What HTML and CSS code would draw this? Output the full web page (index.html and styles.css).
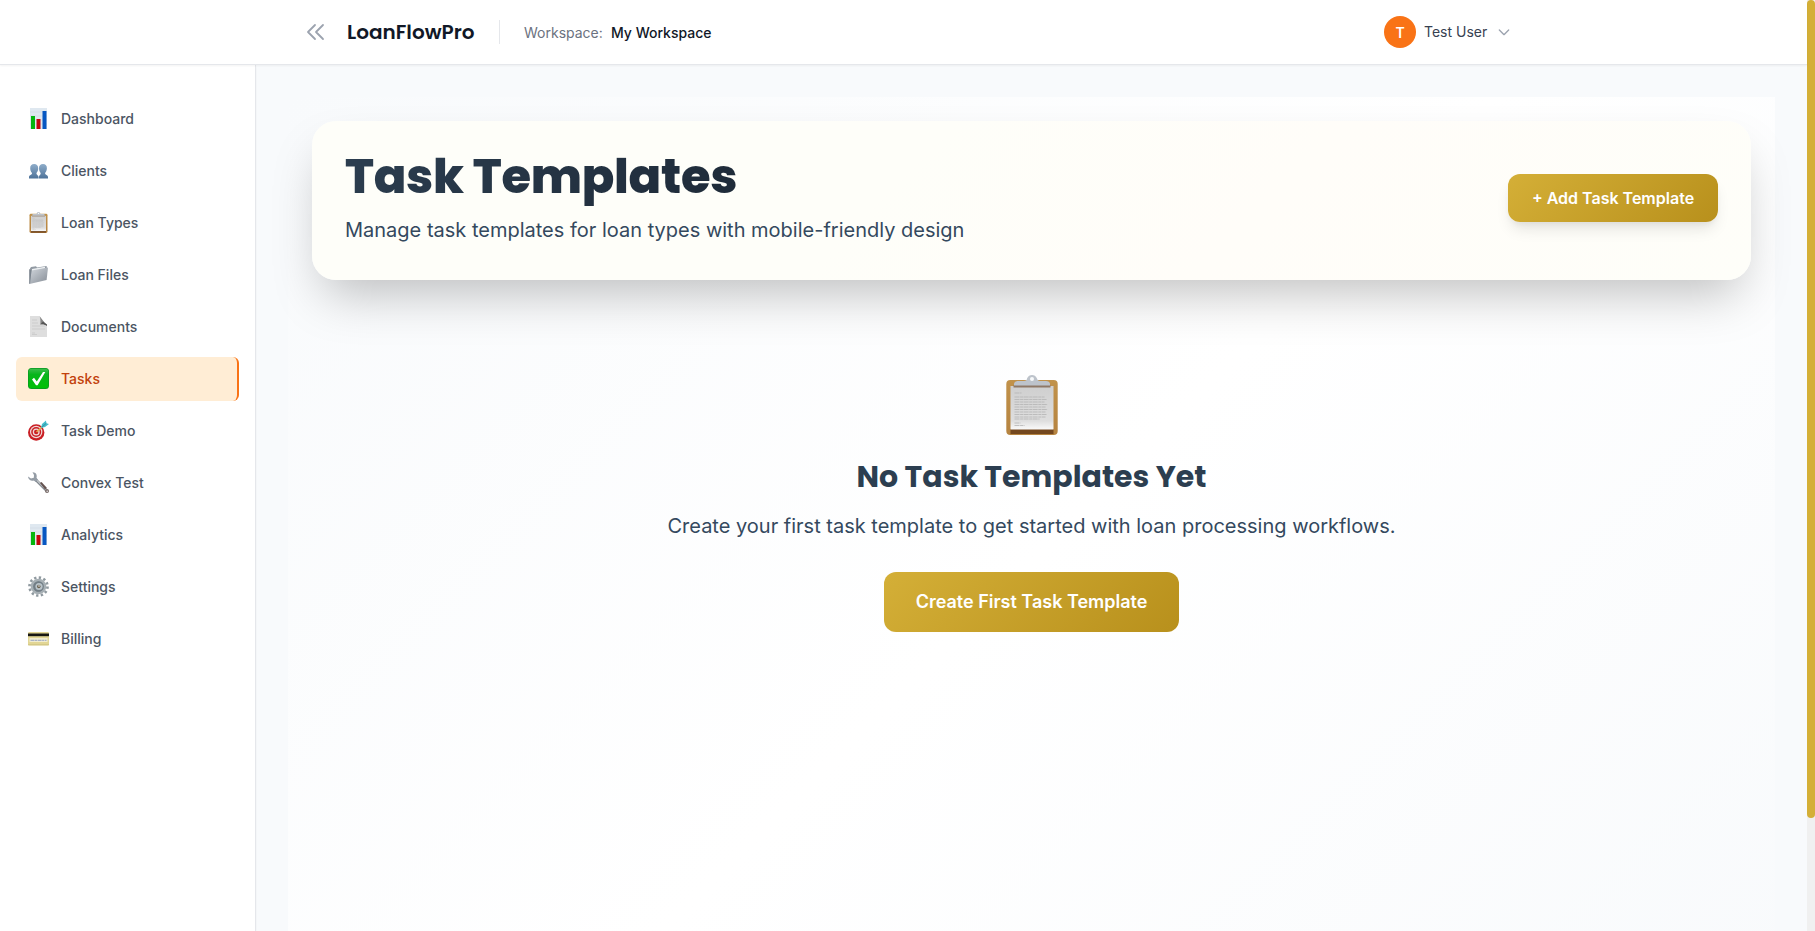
FILE: index.html
```html
<!DOCTYPE html>
<html lang="en">
<head>
<meta charset="utf-8">
<title>LoanFlowPro</title>
<link rel="stylesheet" href="styles.css">
</head>
<body>
<svg class="defs" aria-hidden="true">
  <defs>
    <linearGradient id="bust" x1="0" y1="0" x2="0" y2="1"><stop offset="0" stop-color="#8fadca"/><stop offset="1" stop-color="#4d7299"/></linearGradient>
    <linearGradient id="paper" x1="0" y1="0" x2="0" y2="1"><stop offset="0" stop-color="#cfcfcf"/><stop offset="0.8" stop-color="#dedede"/><stop offset="1" stop-color="#fafafa"/></linearGradient>
    <linearGradient id="steel" x1="0" y1="0" x2="1" y2="1"><stop offset="0" stop-color="#d3d8de"/><stop offset="1" stop-color="#858c95"/></linearGradient>
    <linearGradient id="green" x1="0" y1="0" x2="0" y2="1"><stop offset="0" stop-color="#3bbd4b"/><stop offset="0.3" stop-color="#08b51b"/><stop offset="1" stop-color="#00c105"/></linearGradient>
    <linearGradient id="wood" x1="0" y1="0" x2="0" y2="1"><stop offset="0" stop-color="#c1924a"/><stop offset="1" stop-color="#b58340"/></linearGradient>
    <symbol id="chart" viewBox="0 0 21 21">
      <path fill="#dfe8f0" d="M2 0h17v21H2z"/><path stroke="#c9d6e2" stroke-width=".5" d="M2 4h17M2 8h17M2 12h17M2 16h17"/>
      <path fill="#05b50e" d="M3 8h4v13H3z"/><path fill="#c4060e" d="M8.500 11h4v10h-4z"/><path fill="#0757c2" d="M14.500 3h4v18h-4z"/>
    </symbol>
    <symbol id="people" viewBox="0 0 21 21">
      <path fill="url(#bust)" d="M6.200 4C3.600 4 2 5.600 2.200 8.500c.1 2.500 1 3.300 1.800 4.500.3 2-3 1.800-3 4v1.500h9.500V17c0-2-2.300-2-2-4 1-1.300 1.700-2.500 1.700-4.500C10.300 5.600 8.700 4 6.200 4z"/>
      <path fill="url(#bust)" d="M15 4c-2.500 0-4.200 1.600-4 4.500 0 2.500 1 3.300 1.700 4.500.3 2-1.700 2-1.900 4v1.500H20V17c0-2.200-3.200-2-2.900-4 1-1.300 1.700-2.500 1.800-4.500C19.100 5.600 17.500 4 15 4z"/>
    </symbol>
    <symbol id="clip" viewBox="0 0 60 60">
      <rect x="4.300" y="5" width="51.400" height="55" rx="4" fill="url(#wood)"/><path fill="#74481f" d="M8.500 54h43v5h-43z"/>
      <path fill="url(#paper)" d="M8.500 11h43v43.500h-43z"/><path fill="#8e7867" d="M11.500 10h37v2.500h-37z"/>
      <path fill="#bdc3cb" d="M12 10.500V9c0-2 2-3 4-3h6c2 0 3-1 3-2.500C26 1 28 0 30 0s4 1 5 3.500C35.500 5 36 6 38 6h6c2 0 4 1 4 3v1.500z"/><circle cx="30" cy="4" r="2" fill="#f7f9fb"/>
      <path stroke="#b4b4b4" stroke-width=".8" stroke-dasharray="5 .6 3 .5" d="M12.500 18h7M12.500 22h30M12.500 24.500h32M12.500 27h30M12.500 29.500h33M12.500 32h31M12.500 34.500h33M12.500 37h31M12.500 39.500h32M12.500 42h31M12.500 44h25M12.500 48h6M12.500 50.500h10"/>
    </symbol>
    <symbol id="folder" viewBox="0 0 21 21">
      <path fill="#929aa3" d="M2 4.500 3 3l5-.8 1 1.200L18.500 2l.5 1.500L2 19z"/><path fill="#eef1f3" d="m4 5 13-2.200V5L4 8z"/>
      <path fill="url(#steel)" d="M3.500 6.500 20 3.500 18.600 16 1.500 20z"/><path fill="#7b848e" d="M1.200 5 3.500 6.500 2 20l-.8-.5z"/>
    </symbol>
    <symbol id="doc" viewBox="0 0 21 21">
      <path fill="#dedede" d="M2 0h9l8 9v12H2z"/><path fill="#858585" d="M11.500 0c1.300 3 1 6 .8 8.500C15 8 17 8.500 19 10z"/><path fill="#555" d="M12.300 8.500C15 8 17 8.500 19 10V8.500l-4-3z"/>
      <path stroke="#c6c6c6" stroke-width=".7" d="M4 4h5M4 7h6M4 10h13M4 13h13M4 17h3M4 18.500h5"/>
    </symbol>
    <symbol id="check" viewBox="0 0 21 21">
      <rect width="21" height="21" rx="3.500" fill="#079820"/><rect x=".7" y=".7" width="19.600" height="19.600" rx="3" fill="url(#green)"/>
      <path fill="#fff" d="m4 11.500 2-1.700 2.800 3.700L15 4h2.300L9.600 17.200H8z"/>
    </symbol>
    <symbol id="target" viewBox="0 0 21 21">
      <circle cx="8.200" cy="12.500" r="8.200" fill="#c91f25"/><circle cx="8.200" cy="12" r="6.200" fill="#f1d8d6"/><circle cx="8.200" cy="12" r="5" fill="#c91f25"/><circle cx="8.200" cy="12" r="3.500" fill="#f1d8d6"/><circle cx="8.200" cy="12" r="2.200" fill="#c91f25"/>
      <path stroke="#e3b24d" stroke-width="1.300" d="m8.500 12 6-5.500"/><path fill="#43bccb" d="m13 8 1-4 4-3.500.3 2.800L21 4l-4 3z"/><path stroke="#287987" stroke-width=".6" d="m14 7 4.500-4"/>
    </symbol>
    <symbol id="wrench" viewBox="0 0 21 21">
      <path fill="none" stroke="#7e848b" stroke-width="2.800" stroke-linecap="round" d="m7 7 12 12"/><path stroke="#c1c5c9" stroke-width="1.100" d="m7 6.500 11.500 11.500"/>
      <path fill="#949ca5" d="M4.500.2C8 0 9.500 3 8.500 6L10 7.500 7.500 10 6 8.500C3 9.500.2 7.500 0 4.500l3 2 2.800-.7L6 3z"/><path fill="#655350" d="m12 11 1.500-1 5.500 6-2 1.500z"/><circle cx="19" cy="19" r="2" fill="#7b6d6b"/><circle cx="19.200" cy="19.200" r=".8" fill="#ddd"/>
    </symbol>
    <symbol id="gear" viewBox="0 0 21 21">
      <circle cx="10.500" cy="10.500" r="9" fill="none" stroke="#8f999f" stroke-width="2.700" stroke-dasharray="2.300 2.412"/>
      <circle cx="10.500" cy="10.500" r="6.500" fill="#89949b" stroke="#a6afb4" stroke-width="2.600"/><circle cx="10.500" cy="10.500" r="5.300" fill="#727e86"/><circle cx="11" cy="10.500" r="3.600" fill="#b9c4ca"/><circle cx="10.800" cy="10.500" r="1.800" fill="#69604f"/><circle cx="11" cy="10" r=".8" fill="#eee"/>
    </symbol>
    <symbol id="card" viewBox="0 0 21 21">
      <rect y="4" width="21" height="13.500" rx="1.200" fill="#e2d695"/><path fill="#181713" d="M0 5.500h21v2.700H0z"/><path fill="#f1ecd0" d="M1.500 10h18v4h-18z"/><path stroke="#98a5c4" stroke-width="1" stroke-dasharray="4 .5 2 .6" d="M2.500 12.300h16"/><path fill="#c7ba76" d="M0 16.500h21v.7H0z"/>
    </symbol>
  </defs>
</svg>
<div class="window">
  <div class="page">
    <header class="topbar">
      <div class="brand-group">
        <svg class="collapse" viewBox="0 0 24 24"><path d="m11 19-7-7 7-7m8 14-7-7 7-7"/></svg>
        <span class="brand">LoanFlowPro</span>
        <span class="divider"></span>
        <span class="ws-label">Workspace:</span>
        <span class="ws-name">My Workspace</span>
      </div>
      <div class="user">
        <span class="avatar">T</span>
        <span class="user-name">Test User</span>
        <svg class="caret" viewBox="0 0 24 24"><path d="m19 9-7 7-7-7"/></svg>
      </div>
    </header>
    <div class="body">
      <nav class="sidebar">
        <a class="item"><svg><use href="#chart"/></svg>Dashboard</a>
        <a class="item"><svg><use href="#people"/></svg>Clients</a>
        <a class="item"><svg><use href="#clip"/></svg>Loan Types</a>
        <a class="item"><svg><use href="#folder"/></svg>Loan Files</a>
        <a class="item"><svg><use href="#doc"/></svg>Documents</a>
        <a class="item active"><svg><use href="#check"/></svg>Tasks</a>
        <a class="item"><svg><use href="#target"/></svg>Task Demo</a>
        <a class="item"><svg><use href="#wrench"/></svg>Convex Test</a>
        <a class="item"><svg><use href="#chart"/></svg>Analytics</a>
        <a class="item"><svg><use href="#gear"/></svg>Settings</a>
        <a class="item"><svg><use href="#card"/></svg>Billing</a>
      </nav>
      <main class="main">
        <div class="panel">
          <section class="hero">
            <div>
              <h1 class="title">Task Templates</h1>
              <p class="subtitle">Manage task templates for loan types with mobile-friendly design</p>
            </div>
            <button class="btn add">+ Add Task Template</button>
          </section>
          <section class="empty">
            <svg class="empty-icon"><use href="#clip"/></svg>
            <h2 class="empty-title">No Task Templates Yet</h2>
            <p class="empty-text">Create your first task template to get started with loan processing workflows.</p>
            <button class="btn create">Create First Task Template</button>
          </section>
        </div>
      </main>
    </div>
  </div>
  <div class="scroll-track"><div class="scroll-thumb"></div></div>
</div>
</body>
</html>
```
FILE: styles.css
```css
* { box-sizing: border-box; }
body { margin: 0; overflow: hidden; font-family: Inter, sans-serif; color: #2c3e50; }
h1, h2, p { margin: 0; }
.defs { position: absolute; width: 0; height: 0; }
.window { display: flex; height: 931px; overflow: hidden; }
.page { flex: 1; min-width: 0; display: flex; flex-direction: column; background: #f8fafc; }
.scroll-track { width: 8px; background: #f0f0f0; }
.scroll-thumb { height: 818px; border-radius: 4px; background: #d4af37; }

.topbar { position: relative; z-index: 1; flex: none; display: flex; justify-content: space-between; height: 65px; padding: 0 295px 0 304px; background: #fff; border-bottom: 1px solid #e5e7eb; box-shadow: 0 1px 2px rgba(0,0,0,.05); }
.brand-group, .user { display: flex; align-items: center; white-space: nowrap; }
.collapse { width: 24px; height: 24px; margin-right: 19px; fill: none; stroke: #9ca3af; stroke-width: 1.800; stroke-linecap: round; stroke-linejoin: round; }
.brand { width: 128px; font: 600 20px/28px Poppins, Inter, sans-serif; color: #111827; }
.divider { width: 1px; height: 24px; margin: 0 24px; background: #e5e7eb; }
.ws-label { width: 79px; padding-top: 1px; font-size: 14px; line-height: 20px; color: #6b7280; margin-right: 8px; }
.ws-name { padding-top: 1px; font-size: 14px; line-height: 20px; font-weight: 500; color: #111827; }
.avatar { display: flex; align-items: center; justify-content: center; width: 32px; height: 32px; margin-right: 8px; border-radius: 50%; background: #f97316; color: #fff; font-size: 14px; font-weight: 600; }
.user-name { width: 64px; padding-bottom: 1px; font-size: 14px; line-height: 20px; color: #374151; }
.caret { width: 16px; height: 16px; margin-left: 8px; fill: none; stroke: #9ca3af; stroke-width: 2; stroke-linecap: round; stroke-linejoin: round; }

.body { flex: 1; min-height: 0; display: flex; }
.sidebar { flex: none; display: flex; flex-direction: column; gap: 8px; width: 256px; padding: 32px 16px; background: #fff; border-right: 1px solid #e5e7eb; box-shadow: 0 1px 2px rgba(0,0,0,.05); }
.item { display: flex; align-items: center; gap: 12px; height: 44px; padding: 0 12px 1px; border-radius: 6px; font-size: 14px; line-height: 20px; font-weight: 500; color: #4b5563; }
.item svg { width: 21px; height: 21px; }
.active { background: #ffedd5; color: #c2410c; border-right: 2px solid #f97316; }

.main { flex: 1; min-width: 0; padding: 32px; }
.panel { height: 931px; padding: 24px; background: linear-gradient(135deg, #f8fafc 0%, #fff 50%, #f8fafc 100%); }
.hero { display: flex; align-items: center; justify-content: space-between; height: 159px; padding: 0 33px 5px; border-radius: 24px; background: linear-gradient(135deg, #fefef9 0%, #fefef9 40%, #fffdf9 65%, #fefef9 100%); box-shadow: 0 25px 50px -12px rgba(0,0,0,.25); }
.title { height: 58px; width: max-content; font: 800 48px/58px Poppins, Inter, sans-serif; letter-spacing: -.27px; background: linear-gradient(135deg, #2c3e50, #1e2a38); -webkit-background-clip: text; background-clip: text; color: transparent; }
.subtitle { margin-top: 8px; padding-bottom: 2px; font-size: 20px; line-height: 32px; color: #34495e; }
.btn { border: 0; border-radius: 12px; color: #fff; font-family: Inter, sans-serif; font-weight: 600; background: linear-gradient(135deg, #d4af37, #b8901c); white-space: nowrap; }
.add { width: 210px; height: 48px; padding: 0 0 1px; font-size: 16px; box-shadow: 0 10px 15px -3px rgba(0,0,0,.1), 0 4px 6px -2px rgba(0,0,0,.05); }
.empty { display: flex; flex-direction: column; align-items: center; padding-top: 95px; }
.empty-icon { width: 60px; height: 60px; }
.empty-title { margin-top: 21px; font: 700 30px/42px Poppins, Inter, sans-serif; white-space: nowrap; }
.empty-text { margin-top: 12px; font-size: 20px; line-height: 32px; color: #34495e; }
.create { width: 295px; height: 60px; margin-top: 30px; padding: 0 0 1px; font-size: 18px; }
```
